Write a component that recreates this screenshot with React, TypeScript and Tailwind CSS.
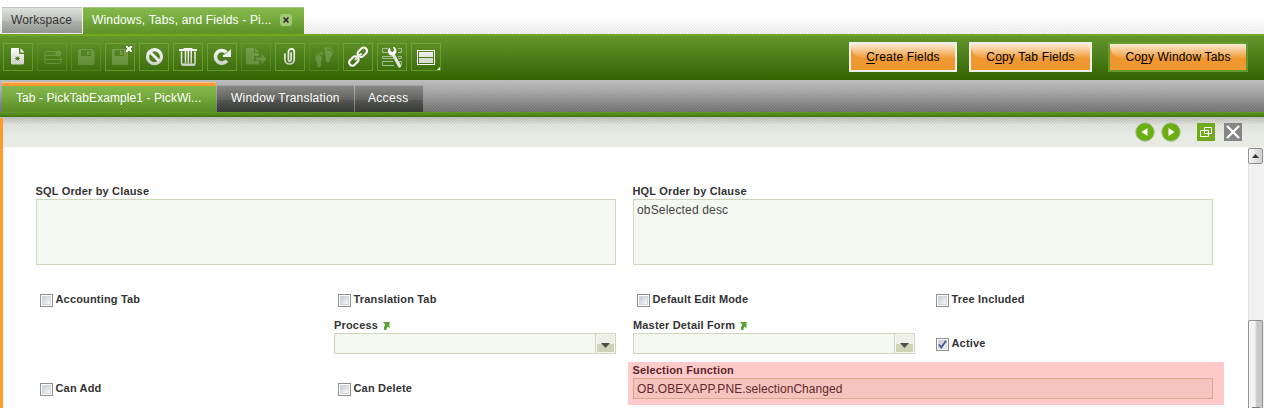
import React from "react";

function Hatch({ className }: { className: string }) {
  return (
    <div
      className={
        "pointer-events-none absolute inset-x-0 bg-[repeating-linear-gradient(135deg,rgba(0,0,0,0.16)_0px,rgba(0,0,0,0.16)_0.8px,transparent_1px,transparent_2.121px)] " +
        className
      }
    />
  );
}

const icons: { dim?: boolean; icon: React.ReactNode }[] = [
  {
    icon: (
      <>
        <path d="M9 5h7v6h5V20a1.500 1.500 0 0 1-1.500 1.500h-10A1.500 1.500 0 0 1 8 20V6a1 1 0 0 1 1-1z" fill="url(#w)" />
        <path d="M17.500 5.200l4 4.300h-4z" fill="#fff" />
        <path d="M14.500 13.500v4M12 15.500h5M12.700 13.700l3.600 3.600M16.300 13.700l-3.600 3.600" stroke="#4b8013" strokeWidth="0.900" />
      </>
    ),
  },
  {
    dim: true,
    icon: (
      <>
        <path d="M19 8.500H9.500a1.500 1.500 0 0 0-1.500 1.500v9a1.500 1.500 0 0 0 1.500 1.500h13a1.500 1.500 0 0 0 1.500-1.500v-5M8 12.500h12M8 16.500h16" fill="none" stroke="#fff" />
        <path d="M21.500 7v7M18 10.500h7M19 8l5 5M24 8l-5 5" stroke="#fff" strokeWidth="0.900" />
        <circle cx="21.500" cy="10.500" r="2.300" fill="none" stroke="#fff" />
      </>
    ),
  },
  {
    dim: true,
    icon: (
      <path d="M8.500 6h12.500l2.500 2.500V20.500a1.500 1.500 0 0 1-1.500 1.500h-13.500a1.500 1.500 0 0 1-1.500-1.500V7.500A1.500 1.500 0 0 1 8.500 6zM10 7v6h10V7zM16 8h2.500v4H16z" fill="#fff" fillRule="evenodd" />
    ),
  },
  {
    icon: (
      <>
        <path opacity="0.2" d="M8 6h12.500l2.500 2.500V20.500a1.500 1.500 0 0 1-1.500 1.500H8.500A1.500 1.500 0 0 1 7 20.500V7A1 1 0 0 1 8 6zM9.500 7v6h9.500V7zM15 8h2.500v4H15z" fill="#fff" fillRule="evenodd" />
        <path d="M21 3h2v1h2V3h2v2h-1v2h1v2h-2V8h-2v1h-2V7h1V5h-1z" fill="#fff" />
      </>
    ),
  },
  {
    icon: (
      <>
        <circle cx="15.500" cy="13.700" r="7" fill="none" stroke="url(#w)" strokeWidth="3.200" />
        <path d="M11 9l9 9" stroke="#eee" strokeWidth="3" />
      </>
    ),
  },
  {
    icon: (
      <>
        <path d="M6 6h4.500V5h9v1H24v2H6z" fill="url(#w)" />
        <path d="M8.500 8.500v12a1.500 1.500 0 0 0 1.500 1.500h10.500a1.500 1.500 0 0 0 1.500-1.500v-12M12.500 8v12.500M15.300 8v12.500M18.200 8v12.500" fill="none" stroke="url(#w)" strokeWidth="1.500" />
        <path d="M8 20.500h14v2H9.500z" fill="#d2d5ce" />
      </>
    ),
  },
  {
    icon: (
      <>
        <path d="M19.800 17.600a6.300 6.300 0 1 1-.3-8" fill="none" stroke="url(#w)" strokeWidth="3.700" />
        <path d="M24 6v8h-8v-2l2.500-1L22 8z" fill="#f0f0ee" />
      </>
    ),
  },
  {
    dim: true,
    icon: (
      <>
        <path d="M5 5h8v5h5v3h-5v5h5v3.500H6.500A1.500 1.500 0 0 1 5 20zM14 5l4 4h-4z" fill="#fff" />
        <path d="M14.500 14.500h6V11l5 5-5 5v-3.500h-6z" fill="#fff" />
      </>
    ),
  },
  {
    icon: (
      <path d="M9.900 11v6a4.700 4.700 0 0 0 9.300 0V8.800a2.900 2.900 0 0 0-5.800 0v8a1.300 1.300 0 0 0 2.700 0V10" fill="none" stroke="url(#w)" strokeWidth="1.700" strokeLinecap="round" />
    ),
  },
  {
    dim: true,
    icon: (
      <g fill="#fff">
        <path d="M8.500 12.500c2.500-1 4.500.5 4.500 2.800 0 2-1.500 2.700-1 4.700.5 2-.5 4.500-2 4.500s-2-1.200-1.700-3.200c.3-2-1.800-2.800-1.800-5.800 0-1.400.8-2.500 2-3zM19 7.500c-2.500-1-3.500 1-3.200 3.300.3 2 1.300 2.700 1 4.700-.3 2 .4 4 1.900 4s2.600-1.500 2.400-3.300c-.2-1.700 2.100-2.700 2.200-5.200.1-1.600-2.300-3-4.300-3.500z" />
        <circle cx="12.500" cy="10.500" r="1.300" />
        <circle cx="9.700" cy="10.500" r="1" />
        <circle cx="7.500" cy="11.700" r=".8" />
        <circle cx="17" cy="5.500" r="1.500" />
        <circle cx="20.300" cy="5.300" r="1.100" />
        <circle cx="22.500" cy="6.700" r="1" />
        <circle cx="24" cy="9" r=".8" />
      </g>
    ),
  },
  {
    icon: (
      <g fill="none" stroke="url(#w)" strokeWidth="2.100">
        <rect x="-5.200" y="-3.300" width="10.400" height="6.600" rx="3.100" transform="translate(19.300 9.300) rotate(-45)" />
        <rect x="-5.200" y="-3.300" width="10.400" height="6.600" rx="3.100" transform="translate(10.800 18) rotate(-45)" />
        <path d="M12.500 16.500l5.500-5.500" strokeLinecap="round" />
      </g>
    ),
  },
  {
    icon: (
      <>
        <path d="M11 5.500H5.500v4H12M5.500 13.500h11v2h-11zM21 5.500h3.500v4H21M21 13.500h3.500v2H21M16 18.500H5.500v4H17M22 18.500h2.500v4" fill="none" stroke="#a9bd93" />
        <path d="M16 11l6.500 12" stroke="#e3e4e1" strokeWidth="3.200" strokeLinecap="round" />
        <path d="M13 4.500c-2.500 1.500-2.800 4.500-1.200 6.500 1.200 1.500 3 1.800 4.700 1.300l2-1.300c1.500-2 1.500-5-1-7L16 3.700l1.200 3.800-1.600 1.600-2-.8z" fill="#fafafa" />
      </>
    ),
  },
  {
    icon: (
      <>
        <rect x="6.500" y="7.500" width="17" height="14" fill="none" stroke="#fff" />
        <rect x="8" y="9" width="14" height="5" fill="url(#w)" />
        <rect x="8" y="15" width="14" height="5" fill="#d9dcd6" />
        <path d="M29 24v3h-3z" fill="#fff" />
      </>
    ),
  },
];

function ToolButton({ dim, icon }: { dim?: boolean; icon: React.ReactNode }) {
  return (
    <div className={"h-7 w-[30px] shrink-0 border " + (dim ? "border-[#7db23f]/30" : "border-[#7db23f]/60")}>
      <svg viewBox="1 1 28 26" className="block h-[26px] w-7 overflow-visible">
        <g opacity={dim ? 0.18 : 1}>{icon}</g>
      </svg>
    </div>
  );
}

function Action({ className, pre, mark, post }: { className: string; pre: string; mark: string; post: string }) {
  return (
    <button
      className={
        "relative h-[30px] border-2 bg-[#f09830] text-center text-[12px] leading-[26px] whitespace-nowrap text-black " + className
      }
    >
      <span className="absolute inset-x-0 top-0 h-[14px] rounded-bl-[12px] bg-linear-to-b from-white/80 to-white/5" />
      <span className="relative">
        {pre}
        <span className="underline underline-offset-2">{mark}</span>
        {post}
      </span>
    </button>
  );
}

function Check({ label, checked, className = "" }: { label: string; checked?: boolean; className?: string }) {
  return (
    <div className={"flex h-[15px] gap-[3px] " + className}>
      <span className="mt-px h-[13px] w-[13px] border border-[#8e8f8f] bg-white p-px">
        <span className="block h-[9px] w-[9px] border border-[#d3d6da] bg-linear-to-br from-[#c6cbd3] to-[#fafafa]">
          {checked && (
            <svg viewBox="0 0 9 9" className="-mt-px -ml-px block h-[9px] w-[9px]">
              <path d="M1 4.500l2.300 3L8 .8" fill="none" stroke="#4358a0" strokeWidth="1.800" />
            </svg>
          )}
        </span>
      </span>
      <div className="-mt-px -ml-[0.5px]">
        <Label>{label}</Label>
      </div>
    </div>
  );
}

function Label({ children, link }: { children: string; link?: boolean }) {
  return (
    <div className="flex h-[14px] items-center text-[11px] leading-[13px] font-bold tracking-[0.17px] whitespace-nowrap text-[#333]">
      {children}
      {link && (
        <svg viewBox="0 0 7 8" className="mt-px ml-[5px] h-2 w-[7px]">
          <path d="M0 0h6.500v6.500L4.800 4.800C3.800 5.400 3.500 6.200 3.500 8H1.200C.6 6 .9 4.200 2.300 2.700z" fill="#5ba331" />
        </svg>
      )}
    </div>
  );
}

function Select() {
  return (
    <div className="flex h-[21px] w-[282px] border border-[#cdd7bb] bg-[#f5f7f1]">
      <div className="flex-1" />
      <div className="w-5 border-l border-[#cdd7bb] p-px">
        <div className="flex h-[17px] items-center justify-center bg-linear-to-b from-[#eef0e6] from-50% to-[#cfd4b8] to-50%">
          <svg viewBox="0 0 9 5" className="mt-1 h-[5px] w-[9px]">
            <path d="M0 0h9L4.500 5z" fill="#4d5145" />
          </svg>
        </div>
      </div>
    </div>
  );
}

function DocTab({ className, children }: { className: string; children: string }) {
  return (
    <div className={"relative h-[27px] border-t border-[#a3a3a3] bg-linear-to-b from-[#888986] to-[#3e403c] text-[12px] leading-[25px] whitespace-nowrap text-white " + className}>
      <Hatch className="bottom-0 h-3" />
      <span className="relative">{children}</span>
    </div>
  );
}

export default function App() {
  return (
    <div className="h-[408px] w-[1264px] overflow-hidden bg-white font-['Liberation_Sans',Arial,sans-serif] text-[12px] tracking-[0.17px]">
      <svg className="absolute h-0 w-0">
        <defs>
          <linearGradient id="w" gradientUnits="userSpaceOnUse" x1="0" y1="4" x2="0" y2="23">
            <stop offset="0" stopColor="#fff" />
            <stop offset="1" stopColor="#c8ccc4" />
          </linearGradient>
        </defs>
      </svg>

      <div className="relative flex h-[34px] gap-px pt-[7px] pl-[2px]">
        <Hatch className="bottom-0 h-[18px] opacity-70 [mask-image:linear-gradient(transparent,black)]" />
        <div className="relative h-[26px] w-20 border-t border-[#c4c7c0] bg-linear-to-b from-[#e0e2dd] to-[#9b9d98] pl-[9px] leading-[25px] tracking-[0.15px] text-[#333]">
          <Hatch className="bottom-0 h-3 opacity-50" />
          <span className="relative">Workspace</span>
        </div>
        <div className="relative flex h-[27px] w-[221px] border-t border-[#a2c680] bg-linear-to-b from-[#85b84c] to-[#639b2a] pl-[9px] leading-[25px] whitespace-nowrap text-white">
          <Hatch className="bottom-0 h-4 opacity-60 [mask-image:linear-gradient(transparent,black)]" />
          <span className="relative w-[188px] shrink-0">Windows, Tabs, and Fields - Pi...</span>
          <span className="relative mt-[6px] flex h-3 w-3 shrink-0 items-center justify-center rounded-[3px] bg-[#a2c87b]">
            <svg viewBox="0 0 6 6" className="h-[6px] w-[6px]">
              <path d="M.5.500l5 5M5.500.500l-5 5" stroke="#222" strokeWidth="1.500" />
            </svg>
          </span>
        </div>
      </div>

      <div className="flex h-[46px] border-t-2 border-[#72a81c] bg-linear-to-b from-[#64962d] to-[#326400] pt-[7px] pl-[3px]">
        <div className="flex gap-1">
          {icons.map((b, i) => (
            <ToolButton key={i} dim={b.dim} icon={b.icon} />
          ))}
        </div>
        <div className="-mt-px ml-[408px] flex">
          <Action className="w-[108px] border-[#eeeeea]" pre="" mark="C" post="reate Fields" />
          <Action className="ml-3 w-[123px] border-[#eeeeea]" pre="C" mark="o" post="py Tab Fields" />
          <Action className="ml-4 w-[140px] border-[#659a2c]" pre="Co" mark="p" post="y Window Tabs" />
        </div>
      </div>

      <div className="relative flex h-8 items-end gap-px bg-linear-to-b from-[#bdbdbd] to-[#808080] pl-[2px]">
        <Hatch className="bottom-0 h-5 [mask-image:linear-gradient(transparent,black)]" />
        <div className="relative h-[30px] w-[214px] border-t-[4px] border-t-[#ff9a30] bg-linear-to-b from-[#85b84c] to-[#5f9627] pl-[14px] leading-[25px] tracking-[0.08px] whitespace-nowrap text-white">
          <div className="absolute inset-x-0 -top-[4px] h-px bg-[#ffc78b]" />
          <Hatch className="bottom-0 h-4 opacity-60 [mask-image:linear-gradient(transparent,black)]" />
          <span className="relative">Tab - PickTabExample1 - PickWi...</span>
        </div>
        <DocTab className="w-[137px] pl-[14px] tracking-[0.22px]">Window Translation</DocTab>
        <DocTab className="w-[68px] pl-[13px] tracking-[0.3px]">Access</DocTab>
      </div>
      <div className="h-[5px] bg-linear-to-b from-[#629a2a] to-[#3f760b]" />
      <div className="h-px bg-[#b9bdb4]" />

      <div className="h-[290px] border-l-[3px] border-[#ff9a30]">
        <div className="relative flex h-[29px] bg-[#e8eae4] pt-1 pl-[1132px]">
          <div className="absolute inset-x-0 top-0 h-[7px] bg-linear-to-b from-black/12 to-transparent" />
          <Hatch className="top-0 h-[17px] opacity-60 [mask-image:linear-gradient(black,transparent)]" />
          <svg viewBox="0 0 20 20" className="relative h-5 w-5">
            <circle cx="10" cy="10" r="9.300" fill="#6aae12" stroke="#b4c2a5" />
            <path d="M12.500 6v8L6.500 10z" fill="#fff" />
          </svg>
          <svg viewBox="0 0 20 20" className="relative ml-[6px] h-5 w-5">
            <circle cx="10" cy="10" r="9.300" fill="#6aae12" stroke="#b4c2a5" />
            <path d="M7.500 6v8l6-4z" fill="#fff" />
          </svg>
          <svg viewBox="0 0 18 18" className="relative mt-px ml-4 h-[18px] w-[18px]">
            <path d="M0 0h18v18H0z" fill="#6fab1b" />
            <path d="M3.500 7.500h8v6h-8zM7.500 4.500h7v6h-7z" fill="none" stroke="#fff" />
          </svg>
          <svg viewBox="0 0 18 18" className="relative mt-px ml-[9px] h-[18px] w-[18px]">
            <path d="M0 0h18v18H0z" fill="#858585" />
            <path d="M3 3l12 12M15 3L3 15" stroke="#fff" strokeWidth="2.300" />
          </svg>
        </div>

        <div className="flex h-[261px]">
          <div className="w-[1245px] pl-[33px]">
            <div className="flex h-[145px] gap-[17px] pt-[37px]">
              <div className="w-[580px]">
                <div className="-ml-[0.5px]">
                  <Label>SQL Order by Clause</Label>
                </div>
                <div className="mt-px h-[66px] border border-[#cdd7bb] bg-[#f5f7f1]" />
              </div>
              <div className="w-[580px]">
                <div className="-ml-[0.5px]">
                  <Label>HQL Order by Clause</Label>
                </div>
                <div className="mt-px h-[66px] border border-[#cdd7bb] bg-[#f5f7f1] px-[3px] pt-[3px] leading-[14px] text-[#444]">obSelected desc</div>
              </div>
            </div>
            <div className="grid h-[26px] grid-cols-[298px_299px_299px_1fr] pt-px">
              <Check className="pl-1" label="Accounting Tab" />
              <Check className="pl-1" label="Translation Tab" />
              <Check className="pl-1" label="Default Edit Mode" />
              <Check className="pl-1" label="Tree Included" />
            </div>
            <div className="grid h-11 grid-cols-[298px_299px_299px_1fr]">
              <div />
              <div>
                <Label link>Process</Label>
                <div className="mt-px">
                  <Select />
                </div>
              </div>
              <div>
                <Label link>Master Detail Form</Label>
                <div className="mt-px">
                  <Select />
                </div>
              </div>
              <Check className="mt-[19px] pl-1" label="Active" checked />
            </div>
            <div className="grid h-[43px] grid-cols-[298px_294px_596px]">
              <Check className="mt-5 pl-1" label="Can Add" />
              <Check className="mt-5 pl-1" label="Can Delete" />
              <div className="h-[43px] bg-[#ffcaca] px-[5px] pt-px pr-[11px]">
                <div className="-ml-[0.5px] [&>div]:text-[#5a262b]">
                  <Label>Selection Function</Label>
                </div>
                <div className="mt-px h-[21px] border border-[#d8a78e] bg-[#f5c4be] pl-[3px] leading-[21px] tracking-[0.05px] text-[#63282c]">OB.OBEXAPP.PNE.selectionChanged</div>
              </div>
            </div>
          </div>
          <div className="flex w-[16px] flex-col border-l border-[#e2e2e2] bg-[#f1f1f1] pt-px">
            <div className="-ml-px flex h-[16px] w-[15px] shrink-0 items-center justify-center rounded-[2px] border border-[#929292] bg-linear-to-r from-[#f5f5f5] to-[#cfcfd2]">
              <svg viewBox="0 0 7 4" className="h-1 w-[7px]">
                <path d="M3.500 0L7 4H0z" fill="#333" />
              </svg>
            </div>
            <div className="mt-[156px] -ml-px flex h-[88px] w-[15px] shrink-0 justify-center rounded-t-[2px] border border-b-0 border-[#929292] bg-linear-to-r from-[#f3f3f3] from-45% to-[#c9c9cb] to-60% pt-[86px]">
              <div className="h-[2px] w-2 bg-[#777]" />
            </div>
          </div>
        </div>
      </div>
    </div>
  );
}
